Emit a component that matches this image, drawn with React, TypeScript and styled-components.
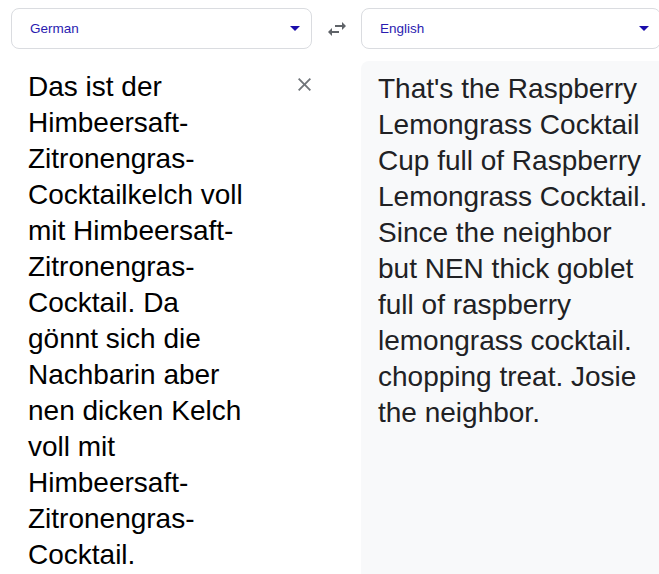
import React from 'react'
import styled, { createGlobalStyle } from 'styled-components'

const GlobalStyle = createGlobalStyle`
    html, body {
        margin: 0;
        padding: 0;
        background: #fff;
        overflow: hidden;
    }
    body {
        font-family: "Liberation Sans", Arial, sans-serif;
    }
`

const Page = styled.div`
    display: grid;
    grid-template-columns: 301px 49px 300px;
    grid-template-rows: 41px 1fr;
    row-gap: 12px;
    padding: 8px 0 0 11px;
    height: 100vh;
    box-sizing: border-box;
`

const LanguageSelect = styled.div`
    display: flex;
    align-items: center;
    justify-content: space-between;
    border: 1px solid #dadce0;
    border-radius: 8px;
    padding: 0 11px 0 18px;
    font-size: 13.5px;
    color: #2a1bb0;
    cursor: pointer;
`

const Caret = styled.svg`
    width: 10px;
    height: 5px;
    fill: #1a0dab;
`

const SwapButton = styled.div`
    display: flex;
    align-items: center;
    justify-content: center;

    > svg {
        width: 18px;
        height: 14px;
        fill: #5f6368;
    }
`

const SourcePane = styled.div`
    display: flex;
    justify-content: space-between;
    align-items: flex-start;
    padding: 8px 1px 0 17px;
`

const SourceText = styled.div`
    width: 224px;
    font-size: 28px;
    line-height: 36px;
    color: #000;
`

const CloseButton = styled.svg`
    width: 13px;
    height: 13px;
    margin-top: 9px;
    fill: #70757a;
    flex: none;
`

const TargetPane = styled.div`
    background: #f8f9fa;
    border-top-left-radius: 8px;
    padding: 10px 11px 0 17px;
`

const TargetText = styled.div`
    font-size: 28px;
    line-height: 36px;
    color: #202124;
`

const sourceText =
    'Das ist der Himbeersaft-Zitronengras-Cocktailkelch voll mit Himbeersaft-Zitronengras-Cocktail. Da gönnt sich die Nachbarin aber nen dicken Kelch voll mit Himbeersaft-Zitronengras-Cocktail.'

const targetText =
    "That's the Raspberry Lemongrass Cocktail Cup full of Raspberry Lemongrass Cocktail. Since the neighbor but NEN thick goblet full of raspberry lemongrass cocktail. chopping treat. Josie the neighbor."

const DropCaret = () => (
    <Caret viewBox="7 10 10 5">
        <path d="M7 10l5 5 5-5z" />
    </Caret>
)

const App: React.FC = () => {
    return (
        <>
            <GlobalStyle />
            <Page>
                <LanguageSelect>
                    <span>German</span>
                    <DropCaret />
                </LanguageSelect>
                <SwapButton>
                    <svg viewBox="3 5 18 14">
                        <path d="M6.99 11L3 15l3.99 4v-3H14v-2H6.99v-3zM21 9l-3.99-4v3H10v2h7.01v3L21 9z" />
                    </svg>
                </SwapButton>
                <LanguageSelect>
                    <span>English</span>
                    <DropCaret />
                </LanguageSelect>

                <SourcePane>
                    <SourceText>{sourceText}</SourceText>
                    <CloseButton viewBox="5 5 14 14">
                        <path d="M19 6.41L17.59 5 12 10.59 6.41 5 5 6.41 10.59 12 5 17.59 6.41 19 12 13.41 17.59 19 19 17.59 13.41 12z" />
                    </CloseButton>
                </SourcePane>
                <div />
                <TargetPane>
                    <TargetText>{targetText}</TargetText>
                </TargetPane>
            </Page>
        </>
    )
}

export default App
